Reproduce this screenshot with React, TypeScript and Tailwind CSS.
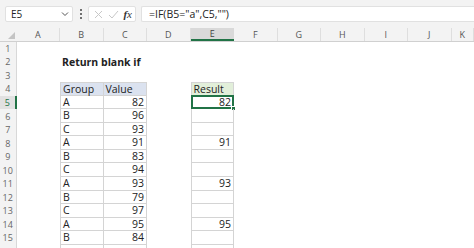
import React from "react";

type Row = {
  n: number;
  b?: string;
  c?: string;
  e?: string;
  title?: string;
  hidden?: boolean;
};

const cols = ["A", "B", "C", "D", "E", "F", "G", "H", "I", "J", "K"];

const data: Row[] = [
  { n: 1 },
  { n: 2, title: "Return blank if" },
  { n: 3 },
  { n: 4, b: "Group", c: "Value", e: "Result" },
  { n: 5, b: "A", c: "82", e: "82" },
  { n: 6, b: "B", c: "96" },
  { n: 7, b: "C", c: "93" },
  { n: 8, b: "A", c: "91", e: "91" },
  { n: 9, b: "B", c: "83" },
  { n: 10, b: "C", c: "94" },
  { n: 11, b: "A", c: "93", e: "93" },
  { n: 12, b: "B", c: "79" },
  { n: 13, b: "C", c: "97" },
  { n: 14, b: "A", c: "95", e: "95" },
  { n: 15, b: "B", c: "84" },
  // row 16 only peeks in at the bottom edge
  { n: 16, hidden: true },
];

const grid = "grid grid-cols-[16.5px_repeat(10,43.5px)_1fr]";

export default function App() {
  return (
    <div className="w-[474px] h-[248px] overflow-hidden bg-white font-['Open_Sans','Liberation_Sans',sans-serif] text-[#222]">
      {/* FORMULA BAR */}
      <div className="h-[28px] bg-[#f3f3f3] flex items-center pl-[5px]">
        <div className="w-[68px] h-[16px] bg-white border border-[#e1e1e1] rounded-[2px] flex items-center justify-between pl-[5px] pr-[3px]">
          <span className="text-[10px] leading-none">E5</span>
          <svg width="8" height="6" viewBox="0 0 8 6">
            <path d="M1 1.5 L4 4.5 L7 1.5" fill="none" stroke="#555" strokeWidth="1" />
          </svg>
        </div>
        <div className="w-[15px] flex flex-col items-center gap-[2px]">
          <span className="w-[2px] h-[2px] bg-[#444] rounded-full" />
          <span className="w-[2px] h-[2px] bg-[#444] rounded-full" />
          <span className="w-[2px] h-[2px] bg-[#444] rounded-full" />
        </div>
        <div className="w-[48px] h-[16px] bg-white border border-[#e1e1e1] rounded-[2px] flex items-center justify-between pl-[5px] pr-[3px]">
          <svg width="9" height="9" viewBox="0 0 9 9">
            <path d="M1 1 L8 8 M8 1 L1 8" stroke="#c8c8c8" strokeWidth="1" />
          </svg>
          <svg width="11" height="9" viewBox="0 0 11 9">
            <path d="M1 5 L4 8 L10 1" fill="none" stroke="#c8c8c8" strokeWidth="1" />
          </svg>
          <span className="text-[11px] leading-none italic font-['Liberation_Serif',serif] text-[#333]">
            <span className="font-bold">f</span>x
          </span>
        </div>
        <div className="ml-[5px] flex-1 h-[16px] bg-white border border-[#e1e1e1] border-r-0 rounded-l-[2px] flex items-center pl-[7px]">
          <span className="text-[10.5px] leading-none">=IF(B5="a",C5,"")</span>
        </div>
      </div>

      {/* COLUMN HEADERS */}
      <div className={`${grid} h-[13.5px] bg-[#f3f3f3] border-b border-[#d0d0d0]`}>
        <div className="relative">
          <svg className="absolute right-[2px] bottom-[2px]" width="7" height="7" viewBox="0 0 7 7">
            <path d="M7 0 L7 7 L0 7 Z" fill="#c4c4c4" />
          </svg>
        </div>
        {cols.map((c) => (
          <div
            key={c}
            className={
              c === "E"
                ? "bg-[#d9d9d9] border-b-2 border-[#217346] flex items-center justify-center text-[9px] leading-none text-[#444]"
                : "border-r border-[#dedede] flex items-center justify-center text-[9px] leading-none text-[#555]"
            }
          >
            {c}
          </div>
        ))}
      </div>

      {/* ROWS */}
      {data.map((r) => (
        <SheetRow key={r.n} row={r} />
      ))}
    </div>
  );
}

function SheetRow({ row }: { row: Row }) {
  const inTable = row.n >= 4;
  const header = row.n === 4;
  const selected = row.n === 5;
  const line = "border-[#d4d4d4]";

  return (
    <div className={`${grid} h-[13.55px] text-[10.5px] leading-none`}>
      <div
        className={
          selected
            ? "bg-[#e1e1e1] border-r-2 border-[#217346] flex items-center justify-center text-[9px] text-[#217346]"
            : "bg-[#f3f3f3] border-r border-[#d8d8d8] flex items-center justify-center text-[9px] text-[#666]"
        }
      >
        {row.hidden ? "" : row.n}
      </div>
      <div />
      {/* B */}
      <div
        className={`relative flex items-center pl-[2px] whitespace-nowrap ${
          inTable ? `border-l border-r border-b ${line}` : ""
        } ${header ? `border-t bg-[#dbe2ef]` : ""} ${row.title ? "font-bold" : ""}`}
      >
        {row.title ?? row.b}
      </div>
      {/* C */}
      <div
        className={`flex items-center ${header ? "justify-start pl-[2px]" : "justify-end pr-[2px]"} ${
          inTable ? `border-r border-b ${line}` : ""
        } ${header ? `border-t bg-[#dbe2ef]` : ""}`}
      >
        {row.c}
      </div>
      <div />
      {/* E */}
      <div
        className={`relative flex items-center ${header ? "justify-start pl-[2px]" : "justify-end pr-[2px]"} ${
          inTable ? `border-l border-r border-b ${line}` : ""
        } ${header ? `border-t bg-[#e2efda]` : ""}`}
      >
        {row.e}
        {selected && (
          <>
            <div className="absolute -left-px -top-px -right-px -bottom-px border-2 border-[#217346]" />
            <div className="absolute -right-[3px] -bottom-[3px] w-[5px] h-[5px] bg-[#217346] border border-white" />
          </>
        )}
      </div>
      <div />
      <div />
      <div />
      <div />
      <div />
      <div />
    </div>
  );
}
